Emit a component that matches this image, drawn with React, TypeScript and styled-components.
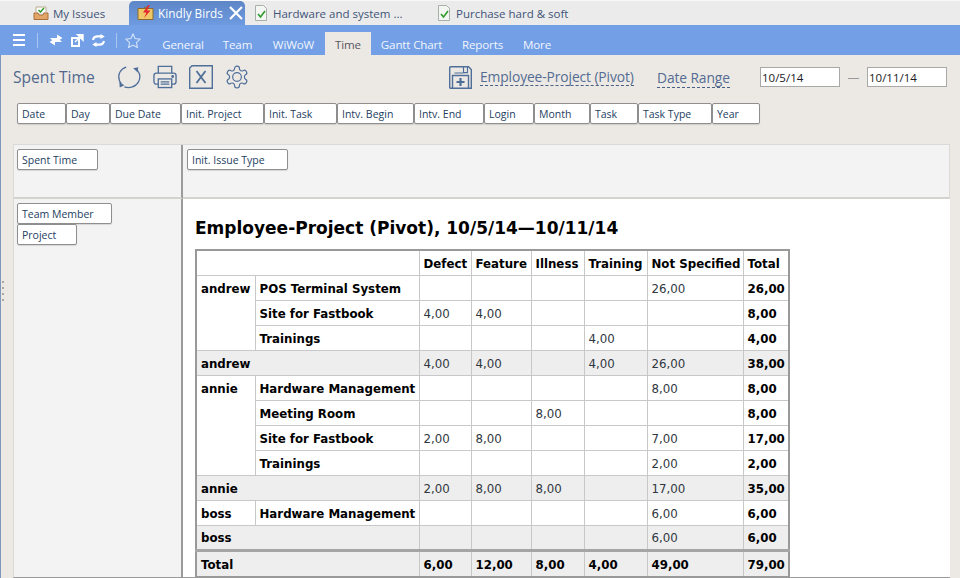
import React from "react";
import styled, { createGlobalStyle } from "styled-components";

const Global = createGlobalStyle`
  html, body { margin: 0; padding: 0; height: 578px; overflow: hidden; background: #ece9e5; }
  body { font-family: "DejaVu Sans", sans-serif; }
  #root { height: 578px; }
`;

const Page = styled.div`
  width: 960px; height: 578px; overflow: hidden; display: flex; flex-direction: column;
  position: relative; background: #ece9e5; box-sizing: border-box;
`;
const TabBar = styled.div`
  height: 25px; flex: none; background: #ebebeb; border-top: 1px solid #f8f8f8; box-sizing: border-box;
  display: flex; padding-left: 33px;
`;
const Tab = styled.div<{ $w: number; $pad?: number; $active?: boolean }>`
  width: ${p => p.$w}px; flex: none; box-sizing: border-box; height: 24px;
  display: flex; align-items: center; gap: 4px; white-space: nowrap; padding-left: ${p => p.$pad ?? 0}px;
  font: 11.5px "Open Sans", sans-serif; color: ${p => (p.$active ? "#fff" : "#3f5378")};
  ${p => p.$active ? `
    background: linear-gradient(#5d86c6, #6e9ae0); border-radius: 5px 5px 0 0; font-size: 11.8px;
  ` : ""}
`;
const Nav = styled.div`
  height: 30px; flex: none; background: #729fe6; display: flex; align-items: flex-end; padding-left: 13px; box-sizing: border-box;
`;
const NavTools = styled.div`
  display: flex; align-items: center; height: 30px; color: #fff; width: 140px; flex: none;
`;
const Sep = styled.div<{ $m: string }>`
  width: 1px; height: 15px; background: #a9c5f0; margin: ${p => p.$m};
`;
const ToolGap = styled.span`
  width: 8px; flex: none;
`;
const NavTab = styled.div<{ $w: number; $active?: boolean }>`
  width: ${p => p.$w}px; height: 23px; flex: none; display: flex; align-items: center; justify-content: center; padding-top: 1px; box-sizing: border-box;
  font: 11.6px "Open Sans", sans-serif; letter-spacing: -0.15px; color: ${p => (p.$active ? "#5a5560" : "#f1f5fd")};
  background: ${p => (p.$active ? "#ece9e5" : "transparent")};
`;
const Main = styled.div`
  flex: 1; min-height: 0; border-left: 1px solid #7f99bb; display: flex; flex-direction: column; padding: 0 10px 0 12px;
`;
const HeaderRow = styled.div`
  height: 44px; flex: none; display: flex; align-items: center; color: #4f6a93; margin-bottom: 4px;
`;
const Heading = styled.div`
  font: 15.6px "Open Sans", sans-serif; width: 104px; color: #51688c; flex: none;
`;
const IconRow = styled.div`
  display: flex; align-items: center; gap: 12px; width: 332px; flex: none;
`;
const Dashed = styled.span`
  font: 13.8px "Open Sans", sans-serif; color: #546c92; border-bottom: 1px dashed #4a5f84; line-height: 17px; white-space: nowrap; letter-spacing: -0.1px;
`;
const SaveWrap = styled.div`
  display: flex; align-items: center; gap: 8px; width: 208px; flex: none;
`;
const RangeWrap = styled.div`
  width: 103px; flex: none;
`;
const DateInput = styled.div`
  box-sizing: border-box; width: 80px; height: 20px; border: 1px solid #a8a8a8; background: #fff; flex: none;
  font: 11.5px "Open Sans", sans-serif; color: #201a24; padding-left: 1px; display: flex; align-items: center;
`;
const Dash = styled.div`
  width: 27px; flex: none; text-align: center; color: #999; font: 12px "Open Sans", sans-serif;
`;
const FieldRow = styled.div`
  height: 22px; flex: none; display: flex; padding-left: 4px;
`;
const Chip = styled.div<{ $w: number }>`
  box-sizing: border-box; width: ${p => p.$w}px; height: 21px; flex: none; background: #fff;
  border: 1px solid #8f8f8f; border-radius: 2px; box-shadow: 0 1px 1px rgba(0,0,0,.12);
  font: 10.5px "Open Sans", sans-serif; color: #24405f; padding-left: 4px; display: flex; align-items: center; white-space: nowrap;
`;
const Pivot = styled.div`
  margin-top: 19px; flex: 1; min-height: 0; display: grid; grid-template-columns: 169px 1fr; grid-template-rows: 54px 1fr;
  border-top: 1px solid #dcdad6; border-left: 1px solid #dcdad6; border-bottom: 1px solid #999; box-sizing: border-box;
`;
const TopLeft = styled.div`
  background: #f3f3f3; padding: 4px 0 0 3px; border-bottom: 2px solid #d5d3cf; border-right: 2px solid #9b9b9b; box-sizing: border-box;
`;
const TopRight = styled.div`
  background: #f3f3f3; padding: 4px 0 0 4px; border-bottom: 2px solid #d5d3cf; border-right: 1px solid #dcdad6; box-sizing: border-box;
`;
const SideLeft = styled.div`
  background: #f3f3f3; padding: 4px 0 0 3px; border-right: 2px solid #9b9b9b; display: flex; flex-direction: column; align-items: flex-start; box-sizing: border-box;
`;
const Content = styled.div`
  background: #fff; padding: 17px 0 0 12px; min-width: 0; overflow: hidden;
`;
const Title = styled.div`
  font: bold 17px "DejaVu Sans", sans-serif; color: #000; height: 33px; line-height: 24px; white-space: nowrap;
`;
const Table = styled.table`
  border-collapse: collapse; table-layout: fixed; width: 595px; border: 2px solid #999; font: 11.8px "DejaVu Sans", sans-serif; color: #30363e;
`;
const Tr = styled.tr<{ $sub?: boolean }>`
  height: 25px; background: ${p => (p.$sub ? "#eeeeee" : "#fff")};
`;
const Td = styled.td<{ $b?: boolean }>`
  border: 1px solid #c8c8c8; padding: 2px 0 0 4px; white-space: nowrap; overflow: hidden; box-sizing: border-box;
  ${p => (p.$b ? "font-weight: bold; color: #000;" : "")}
`;
const TopTd = styled(Td)`
  vertical-align: top; padding-top: 6px;
`;
const TotalTr = styled.tr`
  height: 27px; background: #eeeeee; border-top: 3px solid #a5a5a5;
`;
const Grip = styled.div`
  position: absolute; left: 2px; top: 281px; width: 2px; height: 20px;
  background: repeating-linear-gradient(#a8a8a8 0 2px, transparent 2px 6px);
`;

const ic = { fill: "none", stroke: "#4f6f99", strokeWidth: 1.4 } as const;

const Doc = () => (
  <svg width="16" height="18" viewBox="0 0 16 18">
    <path d="M2.500 1.500h8l3 3v12h-11z" fill="#f4f6f3" stroke="#a7b0a9" />
    <path d="M5 10l2.500 3L12 7" fill="none" stroke="#2f9a2c" strokeWidth="1.600" />
  </svg>
);
const Inbox = () => (
  <svg width="16" height="16" viewBox="0 0 16 16">
    <path d="M3 7V2h10v5" fill="#fff" stroke="#b9a98c" />
    <path d="M5.500 5l2 2 3.500-4" fill="none" stroke="#2f9a2c" strokeWidth="1.500" />
    <path d="M1 8h4l1 2h4l1-2h4v6.500H1z" fill="#e4a566" stroke="#a5713f" />
  </svg>
);
const Bolt = () => (
  <svg width="17" height="16" viewBox="0 0 17 16">
    <path d="M1 3.500h15v11H1z" fill="#efc766" stroke="#8d6a2c" />
    <path d="M1 3.500h6l1-1.500h3" fill="none" stroke="#8d6a2c" />
    <path d="M11.500 0L6 7.500h3.500L7 13l6.500-7.500H10L13 0z" fill="#e5242c" />
  </svg>
);
const Close = () => (
  <svg width="14" height="14" viewBox="0 0 14 14" style={{ marginLeft: 2 }}>
    <path d="M1 1l12 12M13 1L1 13" stroke="#fff" strokeWidth="2.200" />
  </svg>
);
const Menu = () => (
  <svg width="12" height="12" viewBox="0 0 12 12" fill="#fff">
    <rect y="0" width="12" height="2" /><rect y="5" width="12" height="2" /><rect y="10" width="12" height="2" />
  </svg>
);
const Swap = () => (
  <svg width="14" height="12" viewBox="0 0 14 12" fill="#fff">
    <path d="M1 4h7V0.500L13.500 4 9 7 8 6H3z" />
    <path d="M13 8H6v3.500L.5 8 5 5l1 1h5z" />
  </svg>
);
const Ext = () => (
  <svg width="13" height="13" viewBox="0 0 13 13">
    <path d="M1 4h7v8H1z" fill="none" stroke="#fff" strokeWidth="2" />
    <path d="M4 8l6-6M6.500 0.800H12v5.500z" stroke="#fff" fill="#fff" strokeWidth="1.400" />
  </svg>
);
const Refresh = () => (
  <svg width="13" height="13" viewBox="0 0 13 13" fill="none" stroke="#fff" strokeWidth="2.200">
    <path d="M1 6c.5-3 3-4 6-3.600h2" />
    <path d="M12 7c-.5 3-3 4-6 3.600H4" />
    <path d="M8.500 0l4.300 2.500-4.300 2.500zM4.500 8l-4.300 2.500 4.300 2.500z" fill="#fff" stroke="none" />
  </svg>
);
const Star = () => (
  <svg width="16" height="15" viewBox="0 0 16 15" fill="none" stroke="#d3e2f8" strokeWidth="1.100">
    <path d="M8 1l2.100 4.600 5 .6-3.700 3.400 1 4.900L8 12.100l-4.400 2.400 1-4.900L.9 6.200l5-.6z" />
  </svg>
);
const Sync = () => (
  <svg width="24" height="24" viewBox="0 0 26 26" {...ic}>
    <path d="M10 2.300C4 4 .4 10 2.500 16.500c.5 1.500 1.200 2.500 2 3.500" />
    <path d="M8 23.800c5.500 1.700 12.500.2 15.500-6 1.700-3.600 1.300-8.500-1-11.500" />
    <path d="M17.500 3.500l5.500-1-.5 5.500z" fill="#4f6f99" stroke="none" />
    <path d="M2.500 18.500l5.500 3.500-5 2.500z" fill="#4f6f99" stroke="none" />
  </svg>
);
const Printer = () => (
  <svg width="24" height="24" viewBox="0 0 25 24" {...ic}>
    <path d="M5.500 8V1h14v7" />
    <rect x="1" y="8" width="23" height="11.500" rx="2.500" />
    <rect x="5.500" y="14" width="14" height="9" fill="#ece9e5" />
    <path d="M8 17h9M8 19.500h9" />
    <circle cx="20.500" cy="11.500" r=".8" fill="#4f6f99" />
  </svg>
);
const Excel = () => (
  <svg width="24" height="24" viewBox="0 0 24 24" {...ic}>
    <path d="M3 .7h20.300v22.600H.7V3z" />
    <path d="M7.500 6l9 12M16.500 6l-9 12" strokeWidth="1.800" />
  </svg>
);
const Gear = () => (
  <svg width="26" height="26" viewBox="0 0 24 24" fill="none" stroke="#4f6f99" strokeWidth="1.100" strokeLinecap="round" strokeLinejoin="round" style={{ marginLeft: -1 }}>
    <path d="M12.220 2h-.440a2 2 0 0 0-2 2v.180a2 2 0 0 1-1 1.730l-.430.250a2 2 0 0 1-2 0l-.150-.080a2 2 0 0 0-2.730.730l-.220.380a2 2 0 0 0 .730 2.730l.150.100a2 2 0 0 1 1 1.720v.510a2 2 0 0 1-1 1.740l-.150.090a2 2 0 0 0-.730 2.730l.220.380a2 2 0 0 0 2.730.730l.150-.080a2 2 0 0 1 2 0l.430.250a2 2 0 0 1 1 1.730V20a2 2 0 0 0 2 2h.440a2 2 0 0 0 2-2v-.180a2 2 0 0 1 1-1.730l.430-.250a2 2 0 0 1 2 0l.150.080a2 2 0 0 0 2.730-.730l.220-.390a2 2 0 0 0-.730-2.730l-.150-.080a2 2 0 0 1-1-1.740v-.500a2 2 0 0 1 1-1.740l.150-.090a2 2 0 0 0 .730-2.730l-.220-.380a2 2 0 0 0-2.730-.730l-.150.080a2 2 0 0 1-2 0l-.430-.250a2 2 0 0 1-1-1.730V4a2 2 0 0 0-2-2z" />
    <circle cx="12" cy="12" r="4" />
  </svg>
);
const Save = () => (
  <svg width="23" height="23" viewBox="0 0 23 23" {...ic}>
    <path d="M1.500 .7H19.500L22.300 3.500V22.300H1.500a.8.8 0 0 1-.8-.8V1.500a.8.8 0 0 1 .8-.8z" />
    <path d="M14.500 .7v6h4v-6M14.500 7h-9" strokeWidth="1.200" />
    <path d="M3.500 22.300V9.500h16v12.800" />
    <path d="M11.500 12v8M7.500 16h8" strokeWidth="2.200" />
  </svg>
);

const fields: [string, number][] = [
  ["Date", 49], ["Day", 44], ["Due Date", 71], ["Init. Project", 83], ["Init. Task", 73], ["Intv. Begin", 77],
  ["Intv. End", 70], ["Login", 50], ["Month", 56], ["Task", 48], ["Task Type", 74], ["Year", 48],
];
const navs: [string, number, boolean?][] = [
  ["General", 60], ["Team", 49], ["WiWoW", 63], ["Time", 46, true], ["Gantt Chart", 81], ["Reports", 61], ["More", 48],
];
const cols = [59, 164, 52, 60, 53, 63, 96, 46];
const heads = ["Defect", "Feature", "Illness", "Training", "Not Specified", "Total"];
type V = string[];
const E = (a: V) => a.map((v, i) => i === 5 ? <Td key={i} $b>{v}</Td> : <Td key={i}>{v}</Td>);

export default function App() {
  return (
    <Page>
      <Global />
      <TabBar>
        <Tab $w={96}><Inbox />My Issues</Tab>
        <Tab $w={116} $pad={8} $active><Bolt />Kindly Birds<Close /></Tab>
        <Tab $w={191} $pad={8}><Doc />Hardware and system ...</Tab>
        <Tab $w={200}><Doc />Purchase hard &amp; soft</Tab>
      </TabBar>
      <Nav>
        <NavTools>
          <Menu />
          <Sep $m="0 11px 0 12px" />
          <Swap />
          <ToolGap /><Ext />
          <ToolGap /><Refresh />
          <Sep $m="0 8px 0 11px" />
          <Star />
        </NavTools>
        {navs.map(([n, w, a]) => <NavTab key={n} $w={w} $active={a}>{n}</NavTab>)}
      </Nav>
      <Main>
        <HeaderRow>
          <Heading>Spent Time</Heading>
          <IconRow><Sync /><Printer /><Excel /><Gear /></IconRow>
          <SaveWrap><Save /><Dashed>Employee-Project (Pivot)</Dashed></SaveWrap>
          <RangeWrap><Dashed>Date Range</Dashed></RangeWrap>
          <DateInput>10/5/14</DateInput>
          <Dash>—</Dash>
          <DateInput>10/11/14</DateInput>
        </HeaderRow>
        <FieldRow>{fields.map(([n, w]) => <Chip key={n} $w={w}>{n}</Chip>)}</FieldRow>
        <Pivot>
          <TopLeft><Chip $w={81}>Spent Time</Chip></TopLeft>
          <TopRight><Chip $w={101}>Init. Issue Type</Chip></TopRight>
          <SideLeft><Chip $w={95}>Team Member</Chip><Chip $w={60}>Project</Chip></SideLeft>
          <Content>
            <Title>Employee-Project (Pivot), 10/5/14—10/11/14</Title>
            <Table>
              <colgroup>{cols.map((c, i) => <col key={i} style={{ width: c }} />)}</colgroup>
              <tbody>
                <Tr><Td colSpan={2} />{heads.map(h => <Td key={h} $b>{h}</Td>)}</Tr>
                <Tr><TopTd $b rowSpan={3}>andrew</TopTd><Td $b>POS Terminal System</Td>{E(["", "", "", "", "26,00", "26,00"])}</Tr>
                <Tr><Td $b>Site for Fastbook</Td>{E(["4,00", "4,00", "", "", "", "8,00"])}</Tr>
                <Tr><Td $b>Trainings</Td>{E(["", "", "", "4,00", "", "4,00"])}</Tr>
                <Tr $sub><Td $b colSpan={2}>andrew</Td>{E(["4,00", "4,00", "", "4,00", "26,00", "38,00"])}</Tr>
                <Tr><TopTd $b rowSpan={4}>annie</TopTd><Td $b>Hardware Management</Td>{E(["", "", "", "", "8,00", "8,00"])}</Tr>
                <Tr><Td $b>Meeting Room</Td>{E(["", "", "8,00", "", "", "8,00"])}</Tr>
                <Tr><Td $b>Site for Fastbook</Td>{E(["2,00", "8,00", "", "", "7,00", "17,00"])}</Tr>
                <Tr><Td $b>Trainings</Td>{E(["", "", "", "", "2,00", "2,00"])}</Tr>
                <Tr $sub><Td $b colSpan={2}>annie</Td>{E(["2,00", "8,00", "8,00", "", "17,00", "35,00"])}</Tr>
                <Tr><Td $b>boss</Td><Td $b>Hardware Management</Td>{E(["", "", "", "", "6,00", "6,00"])}</Tr>
                <Tr $sub><Td $b colSpan={2}>boss</Td>{E(["", "", "", "", "6,00", "6,00"])}</Tr>
                <TotalTr>
                  <Td $b colSpan={2}>Total</Td>
                  {["6,00", "12,00", "8,00", "4,00", "49,00", "79,00"].map((v, i) => <Td key={i} $b>{v}</Td>)}
                </TotalTr>
              </tbody>
            </Table>
          </Content>
        </Pivot>
      </Main>
      <Grip />
    </Page>
  );
}
